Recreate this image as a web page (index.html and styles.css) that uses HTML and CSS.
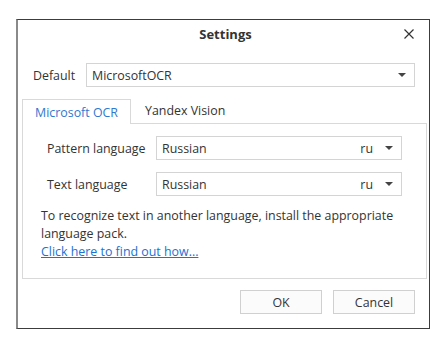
FILE: index.html
```html
<!DOCTYPE html>
<html lang="en">
<head>
    <meta charset="UTF-8">
    <title>Settings</title>
    <link rel="stylesheet" href="styles.css">
</head>
<body>
    <div class="dialog">
        <!-- Title bar -->
        <header class="title-bar">
            <h1>Settings</h1>
            <span class="close">
                <svg width="10" height="10" viewBox="0 0 10 10"><path d="M0.5 0.5 L9.5 9.5 M9.5 0.5 L0.5 9.5" stroke="#333" stroke-width="1.2" fill="none"/></svg>
            </span>
        </header>

        <div class="default-row">
            <label>Default</label>
            <div class="select wide">
                <span class="value">MicrosoftOCR</span>
                <span class="arrow"></span>
            </div>
        </div>

        <!-- Tabs -->
        <div class="tabs">
            <div class="tab active">Microsoft OCR</div>
            <div class="tab">Yandex Vision</div>
        </div>

        <section class="panel">
            <div class="field">
                <label>Pattern language</label>
                <div class="select">
                    <span class="value">Russian</span>
                    <span class="code">ru</span>
                    <span class="arrow"></span>
                </div>
            </div>
            <div class="field">
                <label>Text language</label>
                <div class="select">
                    <span class="value">Russian</span>
                    <span class="code">ru</span>
                    <span class="arrow"></span>
                </div>
            </div>
            <p class="note">To recognize text in another language, install the appropriate language pack.<br>
                <a href="#">Click here to find out how...</a></p>
        </section>

        <footer class="buttons">
            <button>OK</button>
            <button>Cancel</button>
        </footer>
    </div>
</body>
</html>
```
FILE: styles.css
```css
* {
    margin: 0;
    padding: 0;
    box-sizing: border-box;
}

body {
    font-family: 'Open Sans', 'Noto Sans', sans-serif;
    font-size: 12.4px;
    color: #333;
    background: #fff;
}

.dialog {
    margin: 19px 0 0 16px;
    width: 414px;
    height: 310px;
    border: 1px solid #3c3c3c;
    border-left: 2px solid #8a8a8a;
    background: #fff;
}

.title-bar {
    position: relative;
    height: 28px;
    display: flex;
    align-items: center;
    justify-content: center;
}

.title-bar h1 {
    font-size: 13px;
    font-weight: bold;
    color: #333;
    padding-left: 4px;
}

.close {
    position: absolute;
    right: 15px;
    top: 9px;
    display: flex;
}

.default-row {
    display: flex;
    align-items: center;
    margin: 15px 14px 0 15px;
}

.default-row label {
    width: 53px;
}

.select {
    height: 24px;
    border: 1px solid #d4d4d4;
    display: flex;
    align-items: center;
    padding: 0 8px 0 5px;
    background: #fff;
    flex: 1;
}

.select .value {
    flex: 1;
}

.select .code {
    margin-right: 12px;
}

.arrow {
    width: 0;
    height: 0;
    border-left: 4px solid transparent;
    border-right: 4px solid transparent;
    border-top: 4px solid #444;
}

.tabs {
    display: flex;
    margin: 11px 0 0 4px;
    height: 25px;
}

.tab {
    padding: 0 12px 0 14px;
    display: flex;
    align-items: center;
    height: 25px;
}

.tab.active {
    border: 1px solid #d9d9d9;
    border-bottom: none;
    color: #2f78cf;
    width: 109px;
    justify-content: center;
    position: relative;
    top: 1px;
    background: #fff;
    padding: 0;
}

.panel {
    margin: 0 2px 0 4px;
    border: 1px solid #d9d9d9;
    height: 156px;
    padding: 12px 24px 0 18px;
}

.field {
    display: flex;
    align-items: center;
    margin-bottom: 12px;
}

.field label {
    width: 115px;
    padding-left: 6px;
}

.note {
    line-height: 18px;
    margin-top: -1px;
}

.note a {
    color: #2071d2;
}

.buttons {
    display: flex;
    justify-content: flex-end;
    gap: 11px;
    margin: 11px 14px 0 0;
}

button {
    width: 82px;
    height: 24px;
    font-family: inherit;
    font-size: 12.4px;
    color: #333;
    background: #fbfbfb;
    border: 1px solid #d0d0d0;
}
```
